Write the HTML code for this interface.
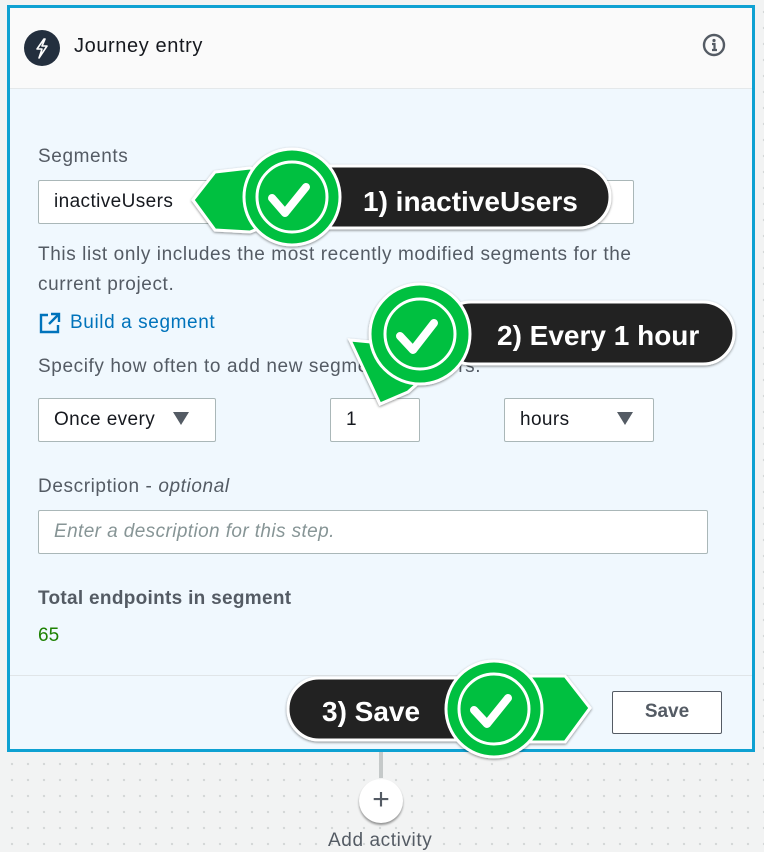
<!DOCTYPE html>
<html><head><meta charset="utf-8"><style>
*{margin:0;padding:0;box-sizing:border-box}
body{width:764px;height:842px;overflow:hidden;position:relative;font-family:"Liberation Sans",sans-serif;background-color:#f2f3f3;background-image:radial-gradient(#d5d8d8 1.2px,transparent 1.3px);background-size:16px 16px;background-position:4px 4px}
.a{position:absolute}
.panel{left:7px;top:5px;width:748px;height:747px;border:3px solid #0ea1d2;background:#f0f8fe}
.hdr{left:10px;top:8px;width:742px;height:81px;background:#fafafa;border-bottom:1px solid #e4e8ea}
.t{color:#545b64;font-size:19px;letter-spacing:0.6px}
.box{background:#fff;border:1px solid #aab7b8;border-radius:2px;font-size:19px;letter-spacing:0.4px;color:#16191f;padding-left:15px;line-height:42px}
.tri{display:inline-block;width:0;height:0;border-left:8px solid transparent;border-right:8px solid transparent;border-top:13px solid #545b64}
.foot{left:10px;top:675px;width:742px;height:74px;border-top:1px solid #e0e5e8}
</style></head><body>
<div class="a panel"></div>
<div class="a hdr"></div>
<div class="a" style="left:24px;top:30px;width:36px;height:36px;border-radius:50%;background:#232f3e"></div>
<svg class="a" style="left:24px;top:30px" width="36" height="36"><path d="M20 9 L13 19 H18 L15 28 L23 16 H18 L21 9 Z" fill="none" stroke="#fff" stroke-width="1.6" stroke-linejoin="round"/></svg>
<div class="a" style="left:74px;top:35px;font-size:20px;letter-spacing:0.6px;color:#16191f">Journey entry</div>
<svg class="a" style="left:702px;top:33px" width="24" height="24"><circle cx="12" cy="12" r="10" fill="none" stroke="#545b64" stroke-width="2.4"/><circle cx="12" cy="7.5" r="1.6" fill="#545b64"/><path d="M10 11h2.5v6M10 17h5" stroke="#545b64" stroke-width="2.2" fill="none"/></svg>

<div class="a t" style="left:38px;top:146px">Segments</div>
<div class="a box" style="left:38px;top:180px;width:494px;height:44px">inactiveUsers</div>
<div class="a box" style="left:564px;top:180px;width:70px;height:44px"></div>
<div class="a t" style="left:38px;top:240px;width:660px;line-height:30px">This list only includes the most recently modified segments for the current project.</div>
<svg class="a" style="left:38px;top:311px" width="24" height="24"><path d="M10 4H3v17h17v-7" fill="none" stroke="#0073bb" stroke-width="2.4"/><path d="M13 3h8v8M21 3L11 13" fill="none" stroke="#0073bb" stroke-width="2.4"/></svg>
<div class="a" style="left:70px;top:312px;font-size:19px;letter-spacing:0.6px;color:#0073bb">Build a segment</div>
<div class="a t" style="left:38px;top:356px">Specify how often to add new segment members.</div>
<div class="a box" style="left:38px;top:398px;width:178px;height:44px">Once every <span class="tri" style="margin-left:12px"></span></div>
<div class="a box" style="left:330px;top:398px;width:90px;height:44px">1</div>
<div class="a box" style="left:504px;top:398px;width:150px;height:44px">hours <span class="tri" style="margin-left:42px"></span></div>
<div class="a t" style="left:38px;top:476px">Description - <i>optional</i></div>
<div class="a box" style="left:38px;top:510px;width:670px;height:44px;color:#879596;font-style:italic">Enter a description for this step.</div>
<div class="a t" style="left:38px;top:588px;font-weight:bold;color:#545b64;letter-spacing:0.3px">Total endpoints in segment</div>
<div class="a" style="left:38px;top:625px;font-size:19px;color:#1d8102">65</div>
<div class="a foot"></div>
<div class="a" style="left:612px;top:691px;width:110px;height:43px;border:1.5px solid #545b64;border-radius:2px;background:#fff;font-weight:bold;font-size:19px;color:#545b64;text-align:center;line-height:40px">Save</div>
<div class="a" style="left:379px;top:752px;width:4px;height:26px;background:#c5c9c9"></div>
<div class="a" style="left:359px;top:779px;width:44px;height:44px;border-radius:50%;background:#fff;box-shadow:0 2px 2px rgba(0,0,0,.4);text-align:center;font-size:30px;line-height:42px;color:#545b64">+</div>
<div class="a t" style="left:328px;top:830px">Add activity</div>

<svg class="a" style="left:0;top:0" width="764" height="842">
<defs><filter id="s"><feDropShadow dx="0" dy="1" stdDeviation="1.2" flood-opacity=".45"/></filter></defs>
<g filter="url(#s)" font-family="Liberation Sans" font-weight="bold" font-size="28" fill="#fff">
<rect x="300" y="166" width="310" height="62" rx="31" fill="#232323" stroke="#fff" stroke-width="3"/>
<path d="M193 200 L215 172 L250 168 L330 200 L250 232 L215 230 Z" fill="#00c040" stroke="#fff" stroke-width="3"/>
<circle cx="292" cy="197" r="48" fill="#00c040" stroke="#fff" stroke-width="3"/>
<circle cx="292" cy="197" r="35" fill="#00c040" stroke="#fff" stroke-width="3"/>
<path d="M272 198 L285 213 L306 187" fill="none" stroke="#fff" stroke-width="8" stroke-linecap="round" stroke-linejoin="round"/>
<text x="363" y="211">1) inactiveUsers</text>
<rect x="440" y="302" width="294" height="62" rx="31" fill="#232323" stroke="#fff" stroke-width="3"/>
<path d="M350 340 L380 404 L408 392 L455 350 Z" fill="#00c040" stroke="#fff" stroke-width="3"/>
<circle cx="420" cy="334" r="50" fill="#00c040" stroke="#fff" stroke-width="3"/>
<circle cx="420" cy="334" r="35" fill="#00c040" stroke="#fff" stroke-width="3"/>
<path d="M400 336 L413 350 L434 323" fill="none" stroke="#fff" stroke-width="8" stroke-linecap="round" stroke-linejoin="round"/>
<text x="497" y="345">2) Every 1 hour</text>
<rect x="288" y="678" width="200" height="62" rx="31" fill="#232323" stroke="#fff" stroke-width="3"/>
<path d="M500 676 L565 676 L590 708 L565 742 L500 742 Z" fill="#00c040" stroke="#fff" stroke-width="3"/>
<circle cx="494" cy="709" r="48" fill="#00c040" stroke="#fff" stroke-width="3"/>
<circle cx="494" cy="709" r="35" fill="#00c040" stroke="#fff" stroke-width="3"/>
<path d="M474 710 L487 724 L508 698" fill="none" stroke="#fff" stroke-width="8" stroke-linecap="round" stroke-linejoin="round"/>
<text x="322" y="721">3) Save</text>
</g>
</svg>
</body></html>
